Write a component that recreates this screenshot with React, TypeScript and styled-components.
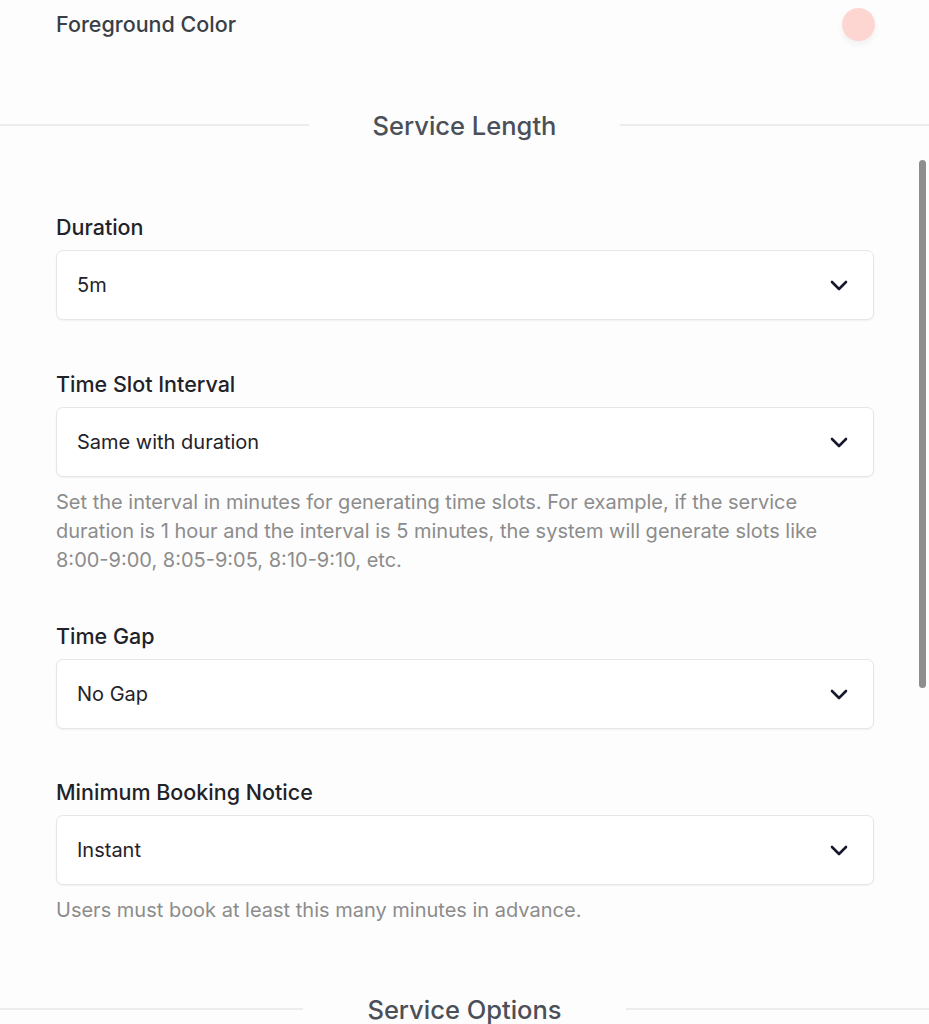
import React from "react";
import styled, { createGlobalStyle } from "styled-components";

const GlobalStyle = createGlobalStyle`
  html, body {
    margin: 0;
    padding: 0;
    background-color: #fdfdfd;
    font-family: Inter, "Noto Sans", "Liberation Sans", sans-serif;
    -webkit-font-smoothing: antialiased;
  }
  * {
    box-sizing: border-box;
  }
`;

const Page = styled.div`
  position: relative;
  width: 929px;
  height: 1024px;
  overflow: hidden;
  background-color: #fdfdfd;
`;

const Padded = styled.div`
  padding: 0 55px 0 56px;
`;

const ColorRow = styled.div`
  display: flex;
  align-items: center;
  justify-content: space-between;
  height: 48px;
  margin-right: -1px;
`;

const ColorLabel = styled.span`
  font-size: 21.5px;
  font-weight: 500;
  color: #3a3f46;
`;

const Swatch = styled.span<{ $color: string }>`
  width: 33px;
  height: 33px;
  border-radius: 50%;
  background-color: ${(p) => p.$color};
  box-shadow: 0 4px 6px rgba(0, 0, 0, 0.05);
`;

const Divider = styled.div<{ $top: number }>`
  display: flex;
  align-items: center;
  margin-top: ${(p) => p.$top}px;
  height: 30px;

  &::before,
  &::after {
    content: "";
    flex: 1;
    height: 2px;
    background-color: #ececec;
  }
`;

const DividerTitle = styled.h2`
  margin: 0;
  padding: 2px 64px 0;
  font-size: 25.5px;
  font-weight: 500;
  color: #4b5058;
  line-height: 30px;
`;

const Field = styled.div<{ $top: number }>`
  margin-top: ${(p) => p.$top}px;
`;

const Label = styled.div`
  font-size: 21.5px;
  font-weight: 500;
  color: #1f2329;
  line-height: 28px;
  margin-bottom: 9px;
`;

const Select = styled.div`
  display: flex;
  align-items: center;
  justify-content: space-between;
  height: 70px;
  padding: 0 25px 0 20px;
  border: 1px solid #e6e6e6;
  border-radius: 7px;
  background-color: #ffffff;
  box-shadow: 0 1px 2px rgba(0, 0, 0, 0.05);
`;

const Value = styled.span`
  font-size: 20px;
  color: #1f2329;
`;

const Help = styled.p`
  margin: 11px 0 0;
  font-size: 20px;
  line-height: 29px;
  color: #8c8c8c;
`;

const Scrollbar = styled.div`
  position: absolute;
  top: 160px;
  right: 3px;
  width: 7px;
  height: 528px;
  border-radius: 4px;
  background-color: #8e8e8e;
`;

function Chevron() {
  return (
    <svg width="18" height="11" viewBox="0 0 18 11" fill="none">
      <path
        d="M2 2l7 7 7-7"
        stroke="#16182b"
        strokeWidth="2.6"
        strokeLinecap="round"
        strokeLinejoin="round"
      />
    </svg>
  );
}

type SelectFieldProps = {
  label: string;
  value: string;
  help?: string;
  top: number;
};

function SelectField({ label, value, help, top }: SelectFieldProps) {
  return (
    <Field $top={top}>
      <Label>{label}</Label>
      <Select>
        <Value>{value}</Value>
        <Chevron />
      </Select>
      {help && <Help>{help}</Help>}
    </Field>
  );
}

export default function App() {
  return (
    <>
      <GlobalStyle />
      <Page>
        <Padded>
          <ColorRow>
            <ColorLabel>Foreground Color</ColorLabel>
            <Swatch $color="#fdd6d2" />
          </ColorRow>
        </Padded>

        <Divider $top={62}>
          <DividerTitle>Service Length</DividerTitle>
        </Divider>

        <Padded>
          <SelectField top={73} label="Duration" value="5m" />
          <SelectField
            top={50}
            label="Time Slot Interval"
            value="Same with duration"
            help="Set the interval in minutes for generating time slots. For example, if the service duration is 1 hour and the interval is 5 minutes, the system will generate slots like 8:00-9:00, 8:05-9:05, 8:10-9:10, etc."
          />
          <SelectField top={47} label="Time Gap" value="No Gap" />
          <SelectField
            top={49}
            label="Minimum Booking Notice"
            value="Instant"
            help="Users must book at least this many minutes in advance."
          />
        </Padded>

        <Divider $top={69}>
          <DividerTitle>Service Options</DividerTitle>
        </Divider>
        <Scrollbar />
      </Page>
    </>
  );
}
